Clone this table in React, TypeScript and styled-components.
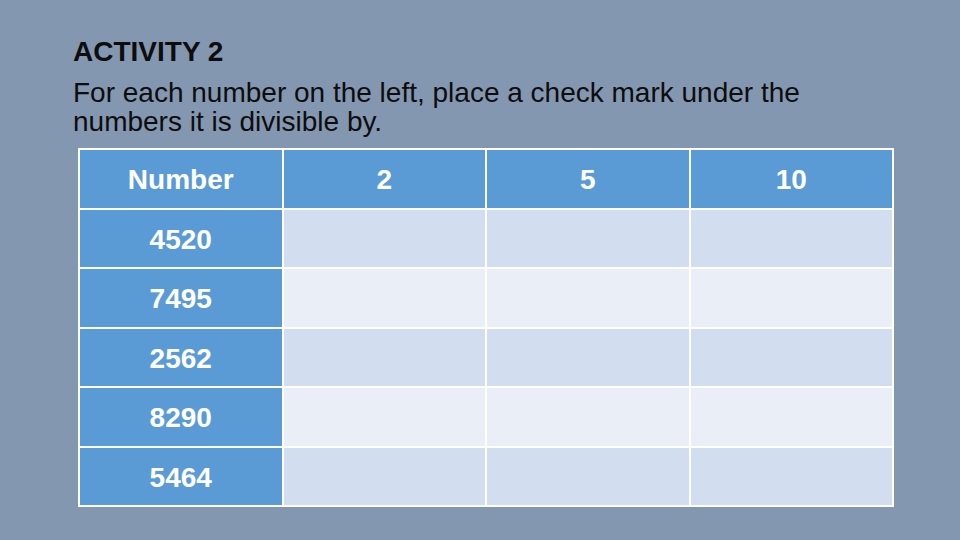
import React from "react";
import styled, { createGlobalStyle } from "styled-components";

const GlobalStyle = createGlobalStyle`
  html, body {
    margin: 0;
    padding: 0;
    background: #8497b0;
  }
  body {
    font-family: "Liberation Sans", Arial, sans-serif;
  }
`;

const Slide = styled.div`
  width: 960px;
  height: 540px;
  box-sizing: border-box;
  padding: 36px 0 0 73px;
  background: #8497b0;
  color: #0d0d0d;
`;

const Title = styled.h1`
  margin: 0;
  font-size: 28px;
  line-height: 32px;
  font-weight: bold;
`;

const Instructions = styled.p`
  margin: 10px 0 0;
  font-size: 28px;
  line-height: 29px;
  font-weight: normal;
  width: 780px;
`;

const Grid = styled.div`
  margin: 12px 0 0 5px;
  width: 816px;
  height: 359px;
  box-sizing: border-box;
  display: grid;
  grid-template-columns: repeat(4, 1fr);
  grid-template-rows: repeat(6, 1fr);
  gap: 2px;
  padding: 2px;
  background: #ffffff;
`;

const Cell = styled.div<{ $tone: "head" | "dark" | "light" }>`
  display: flex;
  align-items: center;
  justify-content: center;
  padding-top: 3px;
  font-size: 28px;
  font-weight: bold;
  color: #ffffff;
  background: ${(p) =>
    p.$tone === "head" ? "#5b9bd5" : p.$tone === "dark" ? "#d2deef" : "#eaeff7"};
`;

const divisors = ["2", "5", "10"];
const numbers = ["4520", "7495", "2562", "8290", "5464"];

export default function App() {
  return (
    <>
      <GlobalStyle />
      <Slide>
        <Title>ACTIVITY 2</Title>
        <Instructions>
          For each number on the left, place a check mark under the numbers it is divisible by.
        </Instructions>
        <Grid>
          <Cell $tone="head">Number</Cell>
          {divisors.map((d) => (
            <Cell key={d} $tone="head">
              {d}
            </Cell>
          ))}
          {numbers.map((n, i) => (
            <React.Fragment key={n}>
              <Cell $tone="head">{n}</Cell>
              {divisors.map((d) => (
                <Cell key={d} $tone={i % 2 === 0 ? "dark" : "light"} />
              ))}
            </React.Fragment>
          ))}
        </Grid>
      </Slide>
    </>
  );
}
